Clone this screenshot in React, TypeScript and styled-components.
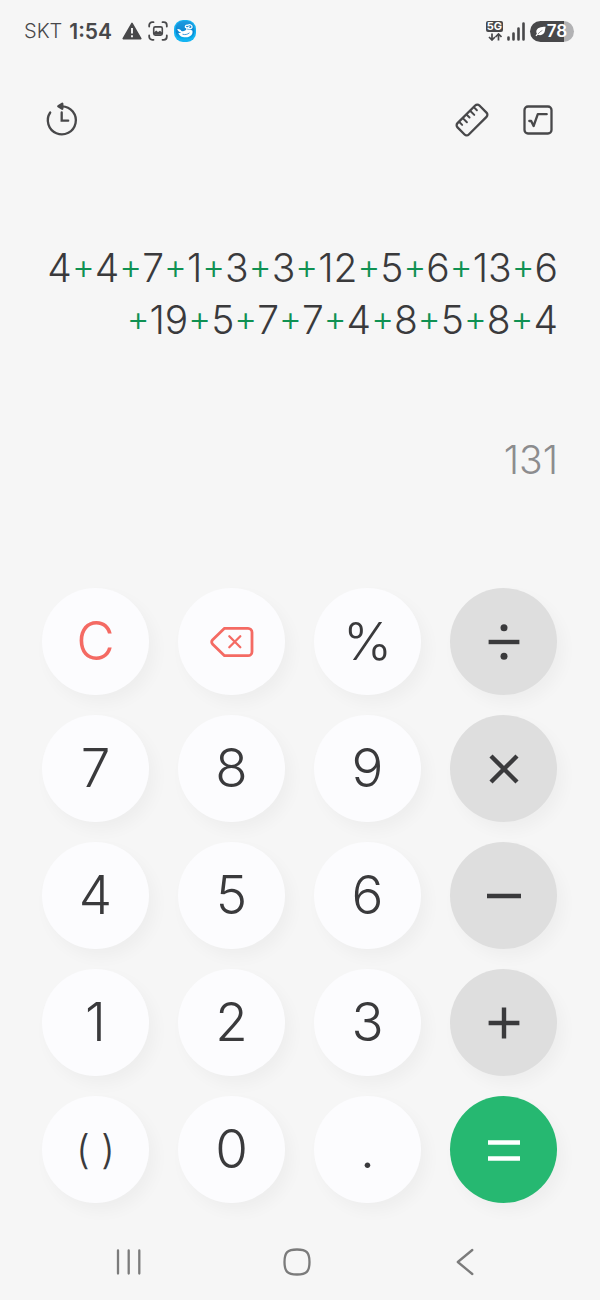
import React from "react";
import styled, { createGlobalStyle, css } from "styled-components";

const GlobalStyle = createGlobalStyle`
  *, *::before, *::after { box-sizing: border-box; }
  body {
    margin: 0;
    background: #f6f6f6;
    color: #3a3a3c;
    font-family: Inter, "Liberation Sans", sans-serif;
  }
  button {
    font: inherit;
    color: inherit;
    border: 0;
    padding: 0;
    background: none;
    cursor: pointer;
  }
  svg { display: block; flex: none; }
`;

const Screen = styled.div`
  display: flex;
  flex-direction: column;
  min-height: 100vh;
`;

const StatusBar = styled.header`
  display: flex;
  align-items: center;
  justify-content: space-between;
  height: 62px;
  padding: 0 26px 0 24px;
  color: #48484a;
`;

const StatusGroup = styled.div<{ $gap: number }>`
  display: flex;
  align-items: center;
  gap: ${(p) => p.$gap}px;
`;

const Carrier = styled.span`
  font-size: 20px;
  font-weight: 300;
  margin-right: 1px;
`;

const Clock = styled.time`
  font-size: 21px;
  font-weight: 600;
  margin-right: 4px;
`;

const Battery = styled.div`
  display: flex;
  align-items: center;
  justify-content: center;
  gap: 1px;
  width: 44px;
  height: 21px;
  margin-left: 1px;
  padding-right: 2px;
  border-radius: 11px;
  background: linear-gradient(90deg, #48484a 78%, #b2b2b4 78%);
  color: #fff;
  font-size: 17px;
  font-weight: 600;
  line-height: 21px;
`;

const Toolbar = styled.nav`
  display: flex;
  align-items: center;
  justify-content: space-between;
  height: 60px;
  margin-top: 28px;
  padding: 0 42px;
  color: #48484a;
`;

const ToolGroup = styled.div`
  display: flex;
  gap: 26px;
`;

const ToolButton = styled.button`
  display: grid;
  place-items: center;
  width: 40px;
  height: 40px;
`;

const Display = styled.section`
  display: flex;
  flex-direction: column;
  gap: 88px;
  height: 438px;
  padding: 92px 42px 0;
  text-align: right;
  font-size: 39px;
  font-weight: 300;
  line-height: 52px;
`;

const Expression = styled.div``;

const Line = styled.div`
  white-space: nowrap;
`;

const Plus = styled.span`
  color: #0f9152;
  font-size: 35px;
  font-feature-settings: "case" 1;
  line-height: 1;
`;

const Result = styled.output`
  color: #8c8c8e;
`;

const Keypad = styled.main`
  display: grid;
  grid-template-columns: repeat(4, 1fr);
  gap: 20px 29px;
  padding: 0 43px 0 42px;
`;

type Kind = "digit" | "clear" | "percent" | "brackets" | "operator" | "equals";

const kinds = {
  digit: css``,
  clear: css`
    color: #f46a63;
  `,
  percent: css`
    font-size: 52px;
  `,
  brackets: css`
    font-size: 40px;
  `,
  operator: css`
    background: #dedede;
  `,
  equals: css`
    background: #26b871;
    color: #fff;
  `,
};

const Key = styled.button<{ $kind: Kind }>`
  display: grid;
  place-items: center;
  aspect-ratio: 1;
  border-radius: 50%;
  background: #fcfcfe;
  box-shadow: 6px 8px 16px rgba(0, 0, 0, 0.035);
  font-size: 53px;
  font-weight: 300;
  line-height: 1;
  ${(p) => kinds[p.$kind]}
`;

const NavBar = styled.footer`
  display: flex;
  align-items: center;
  justify-content: space-between;
  height: 76px;
  margin-top: 21px;
  padding: 0 118px 0 112px;
  color: #7b7b7b;
`;

const NavButton = styled.button`
  display: grid;
  place-items: center;
  width: 34px;
  height: 40px;
`;

const WarningIcon = () => (
  <svg width="20" height="18" viewBox="0 0 20 18" aria-hidden="true">
    <path d="M10 1.4 18.8 16.6H1.2Z" fill="currentColor" stroke="currentColor" strokeWidth="1.6" strokeLinejoin="round" />
    <path d="M10 6v5.4M10 13.2v2" stroke="#f6f6f6" strokeWidth="1.9" />
  </svg>
);

const CaptureIcon = () => (
  <svg width="20" height="20" viewBox="0 0 20 20" fill="none" stroke="currentColor" strokeWidth="1.8" strokeLinecap="round" aria-hidden="true">
    <path d="M1.2 5.5V4.2a3 3 0 0 1 3-3h1.3M14.5 1.2h1.3a3 3 0 0 1 3 3v1.3M18.8 14.5v1.3a3 3 0 0 1-3 3h-1.3M5.5 18.8H4.2a3 3 0 0 1-3-3v-1.3" />
    <rect x="5.7" y="5.9" width="8.6" height="8.2" rx="1.6" strokeWidth="1.6" />
    <path d="M6 13.5v-2l2.2-2 1.8 1.5 2-1.3 2 1.8v2Z" fill="currentColor" stroke="none" />
  </svg>
);

const WhaleIcon = () => (
  <svg width="22" height="22" viewBox="0 0 22 22" aria-hidden="true">
    <defs>
      <linearGradient id="sea" x1="0" y1="0" x2="0" y2="1">
        <stop offset="0" stopColor="#1e9be0" />
        <stop offset="0.6" stopColor="#0a86d2" />
        <stop offset="1" stopColor="#08b4ee" />
      </linearGradient>
    </defs>
    <rect width="22" height="22" rx="9" fill="#14b4f2" />
    <rect x="1.5" y="1" width="19" height="18.5" rx="8" fill="url(#sea)" />
    <path d="M3.2 9.2c1.6-.5 3 .2 4.200 1.700 1.400.9 2.600.3 4-.7 1.800-1.200 4.800-1 6.900.2 1.200 3.400-1.700 6.900-6.600 6.900-4.300 0-6.400-1.600-7.300-4.300 1.100.2 2 .1 2.700-.4-1.700-.4-3-1.500-3.900-3.400Z" fill="#fff" />
    <path d="M8.500 14.200c2.600.8 4.900.3 7-1.400" fill="none" stroke="#2b93d6" strokeWidth="0.9" />
    <path d="M12.800 9.600c.4-1.300 0-2-1.300-2.200-.6-1.500.9-2.900 2.500-2.100 1.600-1.300 4.500-.2 4 1.900-.5 1.700-2.800 2-4.200.6l1.400-1" fill="none" stroke="#fff" strokeWidth="1.300" strokeLinecap="round" />
  </svg>
);

const NetworkBadge = styled.div`
  display: flex;
  flex-direction: column;
  align-items: center;
  gap: 1px;
  width: 17px;
`;

const NetworkLabel = styled.span`
  width: 17px;
  height: 11px;
  border-radius: 2px;
  background: #48484a;
  color: #fff;
  font-size: 11px;
  font-weight: 700;
  line-height: 11px;
  text-align: center;
`;

const DataArrowsIcon = () => (
  <svg width="14" height="8" viewBox="0 0 14 8" fill="none" stroke="currentColor" strokeWidth="1.7" aria-hidden="true">
    <path d="M4 .5v6.3M1 4l3 3 3-3M10.5 7.5V1.400M7.5 4l3-3 3 3" />
  </svg>
);

const SignalIcon = () => (
  <svg width="18" height="19" viewBox="0 0 18 19" stroke="currentColor" strokeWidth="2.6" strokeLinecap="round" aria-hidden="true">
    <path d="M1.5 15.6v1.9M6.5 11.5v6M11.5 6.5v11M16.5 1.500v16" />
  </svg>
);

const LeafIcon = () => (
  <svg width="11" height="11" viewBox="0 0 11 11" aria-hidden="true">
    <path d="M10.600.8C6 .8 1.600 1.800 1.300 5.600c0 1 .2 1.600.6 2.200L.5 9.600l.9.600 1.400-1.500c3.500 1.400 7-.6 7.200-4.500Z" fill="#fff" />
    <path d="M3 8c1.200-1.600 2.500-2.700 4.400-3.600" stroke="#48484a" fill="none" strokeWidth="0.6" />
  </svg>
);

const HistoryIcon = () => (
  <svg width="36" height="36" viewBox="0 0 36 36" fill="none" stroke="currentColor" strokeWidth="2.3" strokeLinecap="round" strokeLinejoin="round" aria-hidden="true">
    <path d="M6.2 10.5A14 14 0 1 0 18 4.300" />
    <path d="m14.300 4.300 4-2.500v5Z" fill="currentColor" />
    <path d="M17.700 10.500v8.200h6.500" strokeLinejoin="miter" />
  </svg>
);

const RulerIcon = () => (
  <svg width="36" height="36" viewBox="0 0 36 36" fill="none" stroke="currentColor" strokeWidth="2.300" strokeLinecap="round" aria-hidden="true">
    <g transform="rotate(-45 18 18)">
      <rect x="2.500" y="10" width="31" height="16" rx="3" />
      <path d="M7.600 10.500v4M12.800 10.500v5.500M18 10.500v4M23.200 10.500v5.500M28.400 10.500v4" strokeWidth="2" />
    </g>
  </svg>
);

const RootIcon = () => (
  <svg width="32" height="32" viewBox="0 0 32 32" fill="none" stroke="currentColor" strokeWidth="2.300" strokeLinecap="round" strokeLinejoin="round" aria-hidden="true">
    <rect x="2.500" y="2.500" width="27" height="27" rx="3.500" />
    <path d="M7.300 17h1.900l2.400 5 4.200-11.800h8.900" />
  </svg>
);

const BackspaceIcon = () => (
  <svg width="44" height="32" viewBox="0 0 44 32" fill="none" stroke="currentColor" strokeWidth="2.800" strokeLinecap="round" strokeLinejoin="round" aria-hidden="true">
    <path d="M14.500 2.300H38a4 4 0 0 1 4 4v19.400a4 4 0 0 1-4 4H14.500L2.700 18.300a3.500 3.500 0 0 1 0-4.600Z" />
    <path d="m19.300 10.200 11 11M30.300 10.200l-11 11" strokeWidth="2.300" />
  </svg>
);

const OperatorSvg = ({ children }: { children: React.ReactNode }) => (
  <svg width="36" height="36" viewBox="0 0 36 36" stroke="currentColor" strokeWidth="4.400" aria-hidden="true">
    {children}
  </svg>
);

const DivideIcon = () => (
  <OperatorSvg>
    <path d="M2.600 18h30.800" />
    <circle cx="18" cy="3.800" r="3.500" fill="currentColor" stroke="none" />
    <circle cx="18" cy="32.200" r="3.500" fill="currentColor" stroke="none" />
  </OperatorSvg>
);

const MultiplyIcon = () => (
  <OperatorSvg>
    <path d="m5 5 26 26M31 5 5 31" />
  </OperatorSvg>
);

const MinusIcon = () => (
  <OperatorSvg>
    <path d="M1 18h34" />
  </OperatorSvg>
);

const PlusIcon = () => (
  <OperatorSvg>
    <path d="M2.600 18h30.800M18 2.600v30.800" />
  </OperatorSvg>
);

const EqualsIcon = () => (
  <OperatorSvg>
    <path d="M2 10.500h32M2 26.500h32" strokeWidth="4.600" />
  </OperatorSvg>
);

const keys: { label: string; kind: Kind; icon?: React.ReactNode }[] = [
  { label: "C", kind: "clear" },
  { label: "Backspace", kind: "clear", icon: <BackspaceIcon /> },
  { label: "%", kind: "percent" },
  { label: "Divide", kind: "operator", icon: <DivideIcon /> },
  { label: "7", kind: "digit" },
  { label: "8", kind: "digit" },
  { label: "9", kind: "digit" },
  { label: "Multiply", kind: "operator", icon: <MultiplyIcon /> },
  { label: "4", kind: "digit" },
  { label: "5", kind: "digit" },
  { label: "6", kind: "digit" },
  { label: "Subtract", kind: "operator", icon: <MinusIcon /> },
  { label: "1", kind: "digit" },
  { label: "2", kind: "digit" },
  { label: "3", kind: "digit" },
  { label: "Add", kind: "operator", icon: <PlusIcon /> },
  { label: "( )", kind: "brackets" },
  { label: "0", kind: "digit" },
  { label: ".", kind: "digit" },
  { label: "Equals", kind: "equals", icon: <EqualsIcon /> },
];

const lines = ["4+4+7+1+3+3+12+5+6+13+6", "+19+5+7+7+4+8+5+8+4"];

export default function App() {
  return (
    <Screen>
      <GlobalStyle />
      <StatusBar>
        <StatusGroup $gap={6}>
          <Carrier>SKT</Carrier>
          <Clock>1:54</Clock>
          <WarningIcon />
          <CaptureIcon />
          <WhaleIcon />
        </StatusGroup>
        <StatusGroup $gap={4}>
          <NetworkBadge>
            <NetworkLabel>5G</NetworkLabel>
            <DataArrowsIcon />
          </NetworkBadge>
          <SignalIcon />
          <Battery>
            <LeafIcon />
            78
          </Battery>
        </StatusGroup>
      </StatusBar>
      <Toolbar>
        <ToolButton aria-label="History"><HistoryIcon /></ToolButton>
        <ToolGroup>
          <ToolButton aria-label="Unit converter"><RulerIcon /></ToolButton>
          <ToolButton aria-label="Scientific mode"><RootIcon /></ToolButton>
        </ToolGroup>
      </Toolbar>
      <Display>
        <Expression>
          {lines.map((line) => (
            <Line key={line}>
              {line.split(/(\+)/).map((part, i) => (part === "+" ? <Plus key={i}>+</Plus> : part))}
            </Line>
          ))}
        </Expression>
        <Result>131</Result>
      </Display>
      <Keypad>
        {keys.map(({ label, kind, icon }) => (
          <Key key={label} $kind={kind} aria-label={icon ? label : undefined}>
            {icon ?? label}
          </Key>
        ))}
      </Keypad>
      <NavBar>
        <NavButton aria-label="Recent apps">
          <svg width="26" height="28" viewBox="0 0 26 28" stroke="currentColor" strokeWidth="2.300" strokeLinecap="round" aria-hidden="true">
            <path d="M2 2.500v23M12.700 2.500v23M23.300 2.500v23" />
          </svg>
        </NavButton>
        <NavButton aria-label="Home">
          <svg width="28" height="28" viewBox="0 0 28 28" fill="none" stroke="currentColor" strokeWidth="2.300" aria-hidden="true">
            <path d="M14 1.500C23.500 1.500 26.500 4.500 26.500 14S23.500 26.500 14 26.500 1.500 23.500 1.500 14 4.500 1.500 14 1.500Z" />
          </svg>
        </NavButton>
        <NavButton aria-label="Back">
          <svg width="18" height="28" viewBox="0 0 18 28" fill="none" stroke="currentColor" strokeWidth="2.300" strokeLinecap="round" strokeLinejoin="round" aria-hidden="true">
            <path d="M16.300 2 1.800 14l14.500 12" />
          </svg>
        </NavButton>
      </NavBar>
    </Screen>
  );
}
